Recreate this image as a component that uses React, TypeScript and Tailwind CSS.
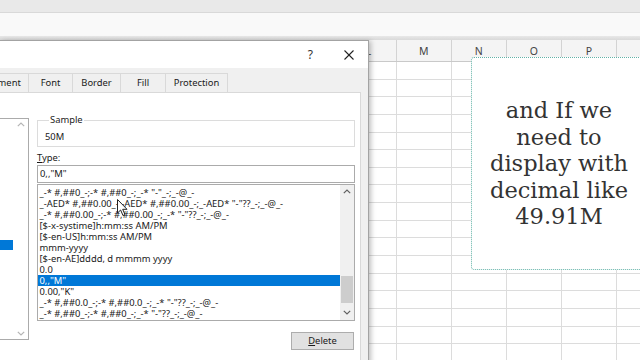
import React from "react";

const items = [
  '_-* #,##0_-;-* #,##0_-;_-* "-"_-;_-@_-',
  '_-AED* #,##0.00_-;-AED* #,##0.00_-;_-AED* "-"??_-;_-@_-',
  '_-* #,##0.00_-;-* #,##0.00_-;_-* "-"??_-;_-@_-',
  "[$-x-systime]h:mm:ss AM/PM",
  "[$-en-US]h:mm:ss AM/PM",
  "mmm-yyyy",
  "[$-en-AE]dddd, d mmmm yyyy",
  "0.0",
  '0,,"M"',
  '0.00,"K"',
  '_-* #,##0.0_-;-* #,##0.0_-;_-* "-"??_-;_-@_-',
  '_-* #,##0_-;-* #,##0_-;_-* "-"??_-;_-@_-',
];

const cols = ["", "L", "M", "N", "O", "P", ""];
const rows = Array.from({ length: 17 }, (_, i) => i);

function Chevron({ up, color }: { up?: boolean; color: string }) {
  return (
    <svg width="8" height="5" viewBox="0 0 8 5">
      <polyline
        points={up ? "0.8,4.2 4,1 7.2,4.2" : "0.8,0.8 4,4 7.2,0.8"}
        fill="none"
        stroke={color}
        strokeWidth="1.2"
      />
    </svg>
  );
}

export default function App() {
  return (
    <div className="relative w-[640px] h-[360px] overflow-hidden bg-white">
      {/* Excel background */}
      <div className="flex flex-col w-full h-full">
        <div className="h-[12px] bg-[#e9e9e9] shrink-0" />
        <div className="h-[1px] bg-[#d9d9d9] shrink-0" />
        <div className="h-[23px] bg-[#f9f9f9] shrink-0" />
        <div className="h-[4px] bg-gradient-to-b from-[#e8e8e8] to-[#d9d9d9] shrink-0" />
        <div className="h-[22px] bg-[#f4f4f4] border-b border-[#c9c9c9] grid grid-cols-[341.5px_repeat(6,55.1px)] shrink-0 font-['Noto_Sans'] text-[10.5px] text-[#444]">
          {cols.map((c, i) => (
            <div
              key={i}
              className="border-r border-[#d3d3d3] flex items-center justify-center pt-[2px]"
            >
              {c}
            </div>
          ))}
        </div>
        {rows.map((r) => (
          <div
            key={r}
            className="h-[17.65px] border-b border-[#dcdcdc] grid grid-cols-[341.5px_repeat(6,55.1px)] shrink-0"
          >
            {cols.map((_, i) => (
              <div key={i} className="border-r border-[#dcdcdc]" />
            ))}
          </div>
        ))}
      </div>

      {/* Text box shape */}
      <div className="absolute left-[471px] top-[57px] w-[176px] h-[213px] bg-white border border-dotted border-[#62b2a7] rounded-[3px] flex items-center justify-center text-center font-['DejaVu_Serif'] text-[22.5px] leading-[26.5px] text-[#333]">
        <div className="flex flex-col items-center">
          <span>and If we</span>
          <span>need to</span>
          <span>display with</span>
          <span>decimal like</span>
          <span>49.91M</span>
        </div>
      </div>

      {/* Dialog window */}
      <div className="absolute left-0 top-[40px] w-[369px] h-[330px] bg-[#f0f0f0] border-t border-r border-[#a3a3a3] shadow-[2px_1px_5px_rgba(0,0,0,0.25)] flex flex-col font-['Noto_Sans'] text-[9.4px] text-[#1a1a1a]">
        {/* Title bar */}
        <div className="h-[27px] bg-white flex items-center justify-end shrink-0 pr-[14px]">
          <span className="text-[12px] text-[#333] leading-none">?</span>
          <svg width="10" height="10" viewBox="0 0 10 10" className="ml-[31px]">
            <line x1="0.5" y1="0.5" x2="9.5" y2="9.5" stroke="#222" strokeWidth="1.1" />
            <line x1="9.5" y1="0.5" x2="0.5" y2="9.5" stroke="#222" strokeWidth="1.1" />
          </svg>
        </div>

        {/* Tabs */}
        <div className="h-[24px] pt-[5px] flex shrink-0">
          <div className="flex -ml-[33px]">
            {[
              ["Alignment", "w-[62px]"],
              ["Font", "w-[44px]"],
              ["Border", "w-[48px]"],
              ["Fill", "w-[45px]"],
              ["Protection", "w-[62px]"],
            ].map(([t, w], i) => (
              <div
                key={t}
                className={`${w} h-[19px] border border-b-0 border-[#d9d9d9] ${
                  i > 0 ? "border-l-0" : ""
                } flex items-center justify-center leading-none`}
              >
                {t}
              </div>
            ))}
          </div>
        </div>

        {/* Panel */}
        <div className="flex-1 bg-white border border-[#d9d9d9] -ml-px mr-[7px] flex items-start pt-[22px]">
          {/* Category list */}
          <div className="mt-[3px] w-[29px] h-[222px] border-y border-r border-[#ababab] flex shrink-0">
            <div className="w-[13px] pt-[121px]">
              <div className="h-[10px] bg-[#0078d7]" />
            </div>
            <div className="flex-1 flex flex-col items-center justify-between py-[3px] bg-white">
              <Chevron up color="#b5b5b5" />
              <Chevron color="#b5b5b5" />
            </div>
          </div>

          {/* Right column */}
          <div className="ml-[8px] w-[318px] flex flex-col">
            <fieldset className="border border-[#dcdcdc] pl-[7px] pt-[6px] pb-[3px]">
              <legend className="ml-[4px] px-[1px] leading-[10px] text-[#222]">
                Sample
              </legend>
              <div className="leading-[12px]">50M</div>
            </fieldset>

            <div className="mt-[5px] leading-[12px]">
              <span className="underline">T</span>ype:
            </div>

            <div className="mt-[1px] h-[17.5px] border border-[#ababab] flex items-center px-[2px]">
              0,,"M"
            </div>

            <div className="mt-[1px] h-[137px] border border-[#ababab] flex">
              <div className="flex-1 pt-[2px] overflow-hidden">
                {items.map((t, i) => (
                  <div
                    key={i}
                    className={`h-[11px] leading-[11px] pl-[1.5px] whitespace-nowrap ${
                      i === 8 ? "bg-[#0078d7] text-white" : ""
                    }`}
                  >
                    {t}
                  </div>
                ))}
              </div>
              <div className="w-[14px] bg-[#f0f0f0] flex flex-col">
                <div className="h-[14px] flex items-center justify-center">
                  <Chevron up color="#606060" />
                </div>
                <div className="flex-1 px-[1px]">
                  <div className="mt-[77px] h-[27px] bg-[#cdcdcd]" />
                </div>
                <div className="h-[14px] flex items-center justify-center">
                  <Chevron color="#606060" />
                </div>
              </div>
            </div>

            <div className="mt-[11px] self-end mr-[1px] w-[63px] h-[18.5px] bg-[#e1e1e1] border border-[#adadad] flex items-center justify-center leading-none">
              <span>
                <span className="underline">D</span>elete
              </span>
            </div>
          </div>
        </div>
      </div>

      {/* Mouse cursor */}
      <svg
        className="absolute left-[117px] top-[199px]"
        width="12"
        height="18"
        viewBox="0 0 12 18"
      >
        <path
          d="M0.5 0.5 L0.5 14 L3.6 11 L6 16.5 L8 15.6 L5.7 10.3 L10 10.3 Z"
          fill="#fff"
          stroke="#222"
          strokeWidth="1"
          strokeLinejoin="round"
        />
      </svg>
    </div>
  );
}
